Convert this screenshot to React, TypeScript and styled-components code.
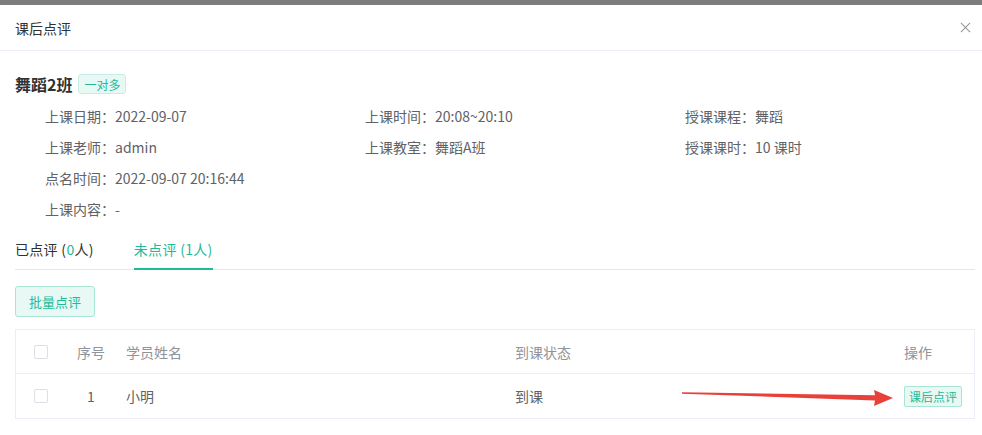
import styled, { createGlobalStyle } from 'styled-components';

const GREEN = '#1dbb97';

const GlobalStyle = createGlobalStyle`
  html, body {
    margin: 0;
    padding: 0;
    background: #ffffff;
  }
  body {
    font-family: "Noto Sans CJK SC", "Noto Sans", "Liberation Sans", sans-serif;
    color: #606266;
  }
  * {
    box-sizing: border-box;
  }
`;

const INFO = [
  { label: '上课日期', value: '2022-09-07' },
  { label: '上课时间', value: '20:08~20:10' },
  { label: '授课课程', value: '舞蹈' },
  { label: '上课老师', value: 'admin' },
  { label: '上课教室', value: '舞蹈A班' },
  { label: '授课课时', value: '10 课时' },
  { label: '点名时间', value: '2022-09-07 20:16:44' },
  { label: '', value: '' },
  { label: '', value: '' },
  { label: '上课内容', value: '-' },
];

const STUDENTS = [{ no: 1, name: '小明', status: '到课' }];

export default function App() {
  return (
    <Page>
      <GlobalStyle />
      <TopShade />
      <Header>
        <span>课后点评</span>
        <CloseIcon viewBox="0 0 12 12">
          <path d="M1 1 L11 11 M11 1 L1 11" />
        </CloseIcon>
      </Header>
      <Body>
        <ClassTitle>
          <h2>舞蹈2班</h2>
          <Tag>一对多</Tag>
        </ClassTitle>
        <InfoGrid>
          {INFO.map((item, index) => (
            <InfoItem key={index}>
              {item.label ? `${item.label}：${item.value}` : ''}
            </InfoItem>
          ))}
        </InfoGrid>
        <Tabs>
          <Tab>
            已点评 (<Num>0</Num>人)
          </Tab>
          <Tab active>未点评 (1人)</Tab>
        </Tabs>
        <Toolbar>
          <LightButton>批量点评</LightButton>
        </Toolbar>
        <Table>
          <Row head>
            <Cell center>
              <Check />
            </Cell>
            <Cell center>序号</Cell>
            <Cell>学员姓名</Cell>
            <Cell>到课状态</Cell>
            <Cell>操作</Cell>
          </Row>
          {STUDENTS.map((s) => (
            <Row key={s.no}>
              <Cell center>
                <Check />
              </Cell>
              <Cell center>{s.no}</Cell>
              <Cell>{s.name}</Cell>
              <Cell>{s.status}</Cell>
              <Cell>
                <SmallButton>课后点评</SmallButton>
              </Cell>
            </Row>
          ))}
        </Table>
      </Body>
      <Arrow width="216" height="22" viewBox="680 386 216 22">
        <polygon
          points="682,392.3 875,395.2 874,390 893,398 874,406 875,400.4 682,393.7"
          fill="#e9403a"
        />
      </Arrow>
    </Page>
  );
}

const Page = styled.div`
  position: relative;
  width: 982px;
  height: 435px;
  overflow: hidden;
  background: #ffffff;
`;

const TopShade = styled.div`
  height: 5px;
  background: #7d7d7d;
`;

const Header = styled.header`
  display: flex;
  justify-content: space-between;
  align-items: center;
  height: 46px;
  padding: 0 10px 0 15px;
  border-bottom: 1px solid #ebeef5;
  & > span {
    color: #303133;
    font-size: 14px;
  }
`;

const CloseIcon = styled.svg`
  width: 11px;
  height: 11px;
  margin-right: 1px;
  & > path {
    stroke: #909399;
    stroke-width: 1.1;
    fill: none;
  }
`;

const Body = styled.section`
  padding: 21px 7px 0 15px;
`;

const ClassTitle = styled.div`
  display: flex;
  align-items: center;
  gap: 6px;
  height: 24px;
  & > h2 {
    margin: 0;
    font-size: 16px;
    font-weight: 700;
    color: #303133;
  }
`;

const Tag = styled.span`
  display: inline-flex;
  align-items: center;
  height: 20px;
  padding: 0 5px;
  font-size: 12px;
  color: ${GREEN};
  background: #e8f8f4;
  border: 1px solid #c6eee4;
  border-radius: 3px;
`;

const InfoGrid = styled.div`
  display: grid;
  grid-template-columns: 320px 320px 320px;
  grid-auto-rows: 31px;
  padding: 4px 0 0 30px;
`;

const InfoItem = styled.div`
  display: flex;
  align-items: center;
  font-size: 14px;
  color: #606266;
  white-space: nowrap;
`;

const Tabs = styled.div`
  display: flex;
  height: 41px;
  margin-top: 5px;
  border-bottom: 1px solid #e4e7ed;
`;

const Tab = styled.div<{ active?: boolean }>`
  position: relative;
  display: flex;
  align-items: center;
  height: 40px;
  margin-right: 40px;
  font-size: 14px;
  letter-spacing: 0.3px;
  color: ${({ active }) => (active ? GREEN : '#303133')};
  &::after {
    content: '';
    display: ${({ active }) => (active ? 'block' : 'none')};
    position: absolute;
    left: 0;
    right: 0;
    bottom: -1px;
    height: 2px;
    background: ${GREEN};
  }
`;

const Num = styled.span`
  color: ${GREEN};
`;

const Toolbar = styled.div`
  display: flex;
  padding: 16px 0 12px;
`;

const LightButton = styled.button`
  width: 80px;
  height: 31px;
  font-family: inherit;
  font-size: 13px;
  color: ${GREEN};
  background: #e8f8f5;
  border: 1px solid #a9e5d7;
  border-radius: 3px;
`;

const Table = styled.div`
  width: 960px;
  border: 1px solid #ebeef5;
  border-bottom: none;
`;

const Row = styled.div<{ head?: boolean }>`
  display: grid;
  grid-template-columns: 50px 50px 389px 389px 80px;
  height: ${({ head }) => (head ? '44px' : '45px')};
  border-bottom: 1px solid #ebeef5;
  font-size: 14px;
  color: ${({ head }) => (head ? '#909399' : '#606266')};
`;

const Cell = styled.div<{ center?: boolean }>`
  display: flex;
  align-items: center;
  justify-content: ${({ center }) => (center ? 'center' : 'flex-start')};
  padding: 0 ${({ center }) => (center ? '0' : '10px')};
  white-space: nowrap;
`;

const Check = styled.span`
  width: 14px;
  height: 14px;
  border: 1px solid #dcdfe6;
  border-radius: 2px;
  background: #ffffff;
`;

const SmallButton = styled.button`
  height: 21px;
  padding: 0 4px;
  font-family: inherit;
  font-size: 12px;
  color: ${GREEN};
  background: #e8f8f5;
  border: 1px solid #a9e5d7;
  border-radius: 2px;
`;

const Arrow = styled.svg`
  position: absolute;
  left: 680px;
  top: 386px;
`;
